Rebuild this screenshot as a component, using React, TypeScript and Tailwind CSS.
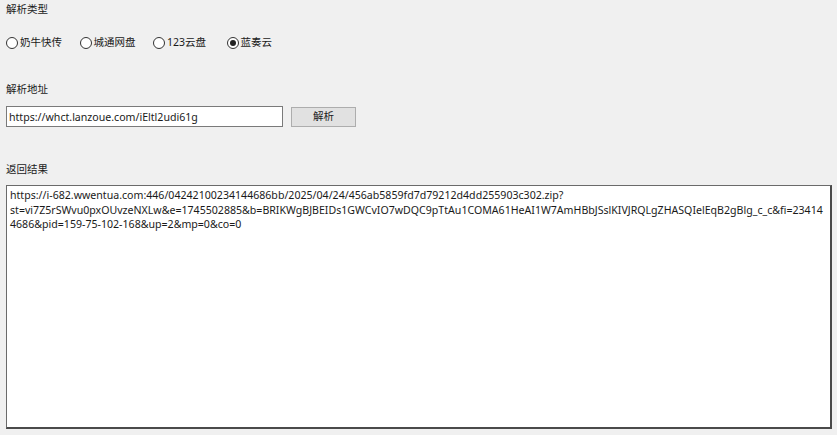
import React, { useState } from 'react';

const FONT = { fontFamily: '"Noto Sans", "Noto Sans CJK SC", sans-serif' };

const sources = ['奶牛快传', '城通网盘', '123云盘', '蓝奏云'];

const resultLines = [
  'https://i-682.wwentua.com:446/04242100234144686bb/2025/04/24/456ab5859fd7d79212d4dd255903c302.zip?',
  'st=vi7Z5rSWvu0pxOUvzeNXLw&e=1745502885&b=BRIKWgBJBEIDs1GWCvIO7wDQC9pTtAu1COMA61HeAI1W7AmHBbJSslKIVJRQLgZHASQIelEqB2gBlg_c_c&fi=23414',
  '4686&pid=159-75-102-168&up=2&mp=0&co=0',
];

const Radio: React.FC<{ label: string; checked: boolean; onClick: () => void }> = ({ label, checked, onClick }) => (
  <button onClick={onClick} className="w-[73.5px] flex items-center gap-[2px] text-[10.5px] text-[#1a1a1a]">
    <span className="w-[12px] h-[12px] rounded-full border border-[#333] bg-white flex items-center justify-center shrink-0">
      {checked && <span className="w-[6px] h-[6px] rounded-full bg-[#222]" />}
    </span>
    <span>{label}</span>
  </button>
);

export default function App() {
  const [source, setSource] = useState('蓝奏云');
  const [url, setUrl] = useState('https://whct.lanzoue.com/iEltl2udi61g');

  return (
    <div style={FONT} className="w-[837px] h-[435px] bg-[#f0f0f0] text-[#1a1a1a] flex flex-col pl-[6px] pr-[5px] overflow-hidden">
      <div className="text-[10.5px] leading-[14px] mt-[2px]">解析类型</div>

      <div className="flex items-center mt-[20px] h-[14px]">
        {sources.map((s) => (
          <Radio key={s} label={s} checked={source === s} onClick={() => setSource(s)} />
        ))}
      </div>

      <div className="text-[10.5px] leading-[14px] mt-[32px]">解析地址</div>

      <div className="flex items-center mt-[10px] gap-[8px]">
        <input
          value={url}
          onChange={(e) => setUrl(e.target.value)}
          className="w-[277px] h-[21px] bg-white border border-[#7a7a7a] px-[2px] text-[10.6px] outline-none"
        />
        <button className="w-[65px] h-[20px] bg-[#e1e1e1] border border-[#adadad] text-[10.5px]">解析</button>
      </div>

      <div className="text-[10.5px] leading-[14px] mt-[35px]">返回结果</div>

      <div className="mt-[9px] h-[244px] bg-white border border-[#6a6a6a] border-r-2 border-b-2 border-r-[#4a4a4a] border-b-[#4a4a4a] px-[3px] pt-[2px] text-[10.6px] leading-[14.5px] whitespace-nowrap overflow-hidden">
        {resultLines.map((l) => (
          <div key={l}>{l}</div>
        ))}
      </div>
    </div>
  );
}
